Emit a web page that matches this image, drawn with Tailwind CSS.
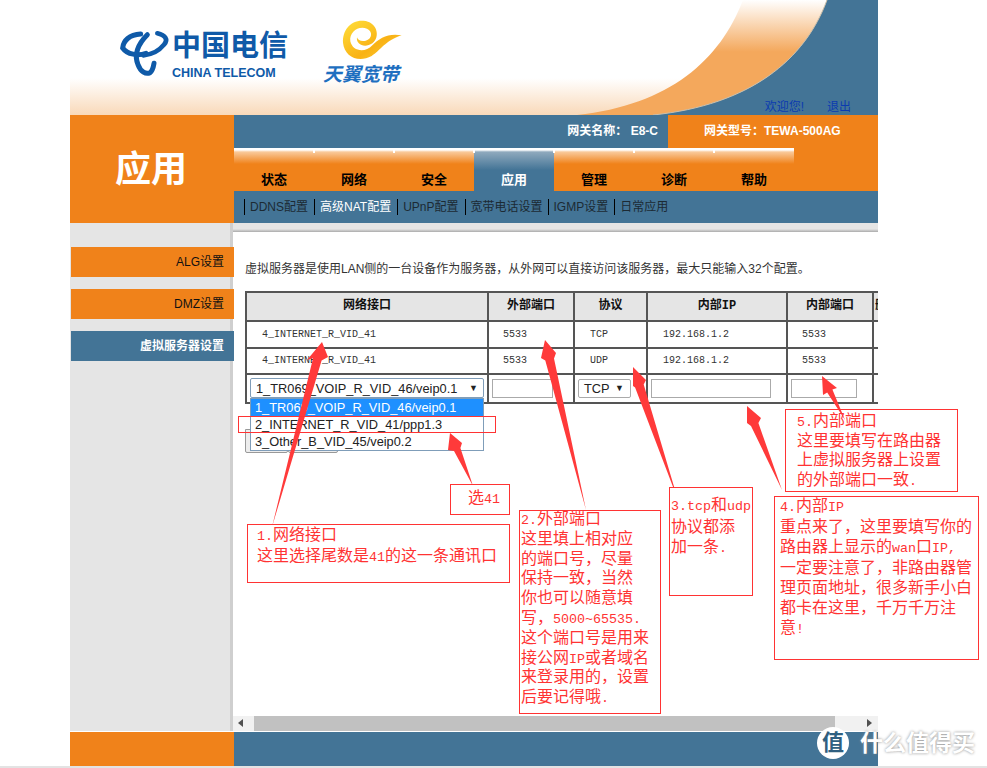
<!DOCTYPE html>
<html lang="zh-CN">
<head>
<meta charset="utf-8">
<script src="https://cdn.jsdelivr.net/npm/@tailwindcss/browser@4"></script>
</head>
<body class="bg-white">
<div class="relative w-[987px] h-[768px] overflow-hidden bg-white text-[12px] [font-family:'Liberation_Sans','Noto_Sans_CJK_SC',sans-serif]">

  <div class="ml-[70px] w-[808px] h-[766px] flex flex-col">
    <!-- header -->
    <header class="relative h-[115px] flex bg-[linear-gradient(#fff_0,#fff_68%,#f9d9b9_100%)]">
      <svg class="absolute inset-0" width="808" height="115" viewBox="0 0 808 115">
        <defs>
          <linearGradient id="sw" x1="0" y1="0" x2="0" y2="1">
            <stop offset="0" stop-color="#fff"/>
            <stop offset=".45" stop-color="#f4a85c"/>
            <stop offset="1" stop-color="#f4a85c"/>
          </linearGradient>
        </defs>
        <path d="M673 0C650 60 600 105 507 115L583 115C680 105 735 60 757 0Z" fill="url(#sw)"/>
        <path d="M757 0C735 60 680 105 583 115L808 115L808 0Z" fill="#437496"/>
        <path d="M757 0C735 60 680 105 583 115" fill="none" stroke="#cdbfa8" stroke-width="1"/>
      </svg>
      <div class="relative flex items-start pl-[40px] pt-[20px]">
        <svg width="62" height="70" viewBox="0 0 186 210" fill="none" stroke="#0f5aa8" stroke-linecap="round">
          <path d="M92 42C58 44 40 62 38 84C52 104 84 108 108 100" stroke-width="15"/>
          <path d="M142 40C166 46 176 58 162 74C146 94 124 104 100 106" stroke-width="14"/>
          <path d="M112 44C84 72 72 104 84 134C92 156 108 164 120 158C128 152 130 142 132 130" stroke-width="15"/>
        </svg>
        <div class="w-[118px] pt-[6px] flex flex-col text-[#0f5aa8]">
          <div class="text-[29px] leading-[40px] font-bold whitespace-nowrap">中国电信</div>
          <div class="text-[12.5px] leading-[14px] font-bold whitespace-nowrap">CHINA TELECOM</div>
        </div>
        <div class="ml-[25px] -mt-[10px] w-[100px] flex flex-col">
          <svg width="100" height="56" viewBox="0 0 300 168">
            <defs>
              <linearGradient id="gd" x1="0" y1="0" x2="1" y2="1">
                <stop offset="0" stop-color="#ffdf3a"/>
                <stop offset=".6" stop-color="#f9b215"/>
                <stop offset="1" stop-color="#fbd23a"/>
              </linearGradient>
            </defs>
            <path d="M145 32C105 30 82 62 84 98C88 140 130 160 170 138C196 122 210 92 260 76C222 68 192 84 172 106C150 130 112 124 106 94C102 66 130 46 156 56C174 64 172 86 152 92C140 96 128 90 126 82C122 104 150 116 172 100C198 80 186 34 145 32Z" fill="url(#gd)"/>
          </svg>
          <div class="pl-[8px] text-[19px] leading-[18px] font-bold italic text-[#1e6fc0] whitespace-nowrap">天翼宽带</div>
        </div>
      </div>
      <div class="relative ml-auto self-end flex gap-[23px] pr-[27px] text-[12px] leading-[16px] text-[#0b3bb0]">
        <span>欢迎您!</span><span>退出</span>
      </div>
    </header>

    <!-- nav -->
    <div class="h-[108px] flex">
      <div class="w-[164px] bg-[#f0821a] text-white text-[36px] font-bold flex items-center justify-center pr-[2px] pt-[3px]">应用</div>
      <div class="flex-1 flex flex-col">
        <div class="h-[33px] flex bg-[#437496] text-white font-bold">
          <div class="flex-1 flex items-center justify-end pr-[10px] whitespace-pre">网关名称： E8-C</div>
          <div class="w-[210px] bg-[#f0821a] flex items-center pl-[36px]">网关型号：TEWA-500AG</div>
        </div>
        <div class="h-[43px] flex bg-[#f0821a] font-bold text-[13px] text-black">
          <div class="relative w-[80px] flex items-end justify-center pb-[2px] leading-[18px] bg-[linear-gradient(#fff_0,#fff_2px,#f9c99a_4px,#f0821a_16px)]">状态</div>
          <div class="relative w-[80px] flex items-end justify-center pb-[2px] leading-[18px] bg-[linear-gradient(#fff_0,#fff_2px,#f9c99a_4px,#f0821a_16px)]"><i class="absolute left-[-1px] top-[2px] w-[2px] h-[3px] bg-white"></i>网络</div>
          <div class="relative w-[80px] flex items-end justify-center pb-[2px] leading-[18px] bg-[linear-gradient(#fff_0,#fff_2px,#f9c99a_4px,#f0821a_16px)]"><i class="absolute left-[-1px] top-[2px] w-[2px] h-[3px] bg-white"></i>安全</div>
          <div class="relative w-[80px] flex items-end justify-center pb-[2px] leading-[18px] text-white bg-[linear-gradient(#fff_0,#fff_2px,#8fa9bd_4px,#437496_22px)]"><i class="absolute left-[-1px] top-[2px] w-[2px] h-[3px] bg-white"></i>应用</div>
          <div class="relative w-[80px] flex items-end justify-center pb-[2px] leading-[18px] bg-[linear-gradient(#fff_0,#fff_2px,#f9c99a_4px,#f0821a_16px)]"><i class="absolute left-[-1px] top-[2px] w-[2px] h-[3px] bg-white"></i>管理</div>
          <div class="relative w-[80px] flex items-end justify-center pb-[2px] leading-[18px] bg-[linear-gradient(#fff_0,#fff_2px,#f9c99a_4px,#f0821a_16px)]"><i class="absolute left-[-1px] top-[2px] w-[2px] h-[3px] bg-white"></i>诊断</div>
          <div class="relative w-[80px] flex items-end justify-center pb-[2px] leading-[18px] bg-[linear-gradient(#fff_0,#fff_2px,#f9c99a_4px,#f0821a_16px)]"><i class="absolute left-[-1px] top-[2px] w-[2px] h-[3px] bg-white"></i>帮助</div>
        </div>
        <div class="h-[32px] bg-[#437496] flex items-center pl-[10px] pt-[1px] text-[#1c2a33] leading-[16px] whitespace-nowrap">
          <span class="border-l border-black pl-[5px] pr-[6px]">DDNS配置</span>
          <span class="border-l border-black pl-[5px] pr-[6px] text-white">高级NAT配置</span>
          <span class="border-l border-black pl-[5px] pr-[6px]">UPnP配置</span>
          <span class="border-l border-black pl-[5px] pr-[5px]">宽带电话设置</span>
          <span class="border-l border-black pl-[5px] pr-[6px]">IGMP设置</span>
          <span class="border-l border-black pl-[5px] pr-[6px]">日常应用</span>
        </div>
      </div>
    </div>

    <!-- body -->
    <div class="h-[509px] flex">
      <aside class="w-[163px] bg-[#e5e5e5] border-r-[3px] border-[#cfcfcf] pt-[24px] flex flex-col gap-[12px]">
        <div class="ml-[1px] w-[163px] h-[30px] bg-[#f0821a] flex items-center justify-end pr-[10px] text-[#111]">ALG设置</div>
        <div class="ml-[1px] w-[163px] h-[30px] bg-[#f0821a] flex items-center justify-end pr-[10px] text-[#111]">DMZ设置</div>
        <div class="ml-[1px] w-[163px] h-[30px] bg-[#437496] flex items-center justify-end pr-[10px] text-white font-bold">虚拟服务器设置</div>
      </aside>
      <main class="flex-1 flex flex-col min-w-0">
        <div class="h-[9px] bg-[linear-gradient(#e5e5e5_0,#e5e5e5_6px,#aaa_100%)]"></div>
        <div class="relative h-[484px] pl-[12px]">
          <p class="pt-[30px] leading-[14px] text-[#333] whitespace-nowrap">虚拟服务器是使用LAN侧的一台设备作为服务器，从外网可以直接访问该服务器，最大只能输入32个配置。</p>
          <div class="mt-[15px] w-[633px] overflow-hidden">
            <table class="table-fixed border-collapse w-[727px] text-[10px] text-[#333] [font-family:'Liberation_Mono','Noto_Sans_CJK_SC',monospace]">
              <thead>
                <tr class="h-[29px] bg-[#e5e5e5] text-[12px] text-[#111]">
                  <th class="w-[242px] border-2 border-[#555] font-bold">网络接口</th>
                  <th class="w-[86px] border-2 border-[#555] font-bold">外部端口</th>
                  <th class="w-[73px] border-2 border-[#555] font-bold">协议</th>
                  <th class="w-[140px] border-2 border-[#555] font-bold">内部IP</th>
                  <th class="w-[86px] border-2 border-[#555] font-bold">内部端口</th>
                  <th class="w-[100px] border-2 border-[#555] font-bold text-left pl-[1px]">删除</th>
                </tr>
              </thead>
              <tbody>
                <tr class="h-[27px]">
                  <td class="border-2 border-[#555] pl-[15px]">4_INTERNET_R_VID_41</td>
                  <td class="border-2 border-[#555] pl-[14px]">5533</td>
                  <td class="border-2 border-[#555] pl-[15px]">TCP</td>
                  <td class="border-2 border-[#555] pl-[15px]">192.168.1.2</td>
                  <td class="border-2 border-[#555] pl-[14px]">5533</td>
                  <td class="border-2 border-[#555]"></td>
                </tr>
                <tr class="h-[26px]">
                  <td class="border-2 border-[#555] pl-[15px]">4_INTERNET_R_VID_41</td>
                  <td class="border-2 border-[#555] pl-[14px]">5533</td>
                  <td class="border-2 border-[#555] pl-[15px]">UDP</td>
                  <td class="border-2 border-[#555] pl-[15px]">192.168.1.2</td>
                  <td class="border-2 border-[#555] pl-[14px]">5533</td>
                  <td class="border-2 border-[#555]"></td>
                </tr>
                <tr class="h-[29px] text-[12.8px] [font-family:'Liberation_Sans',sans-serif] text-[#222]">
                  <td class="border-2 border-[#555] pl-[3px]">
                    <div class="w-[234px] h-[20px] flex items-center justify-between px-[5px] border border-[#7f9db9] rounded-[2px]"><span>1_TR069_VOIP_R_VID_46/veip0.1</span><span class="text-[9px]">▼</span></div>
                  </td>
                  <td class="border-2 border-[#555] pl-[3px]"><div class="w-[61px] h-[19px] border border-[#aaa]"></div></td>
                  <td class="border-2 border-[#555] pl-[3px]">
                    <div class="w-[53px] h-[19px] flex items-center justify-between pl-[5px] pr-[6px] border border-[#aaa] rounded-[2px]"><span>TCP</span><span class="text-[9px]">▼</span></div>
                  </td>
                  <td class="border-2 border-[#555] pl-[3px]"><div class="w-[120px] h-[19px] border border-[#aaa]"></div></td>
                  <td class="border-2 border-[#555] pl-[3px]"><div class="w-[66px] h-[19px] border border-[#aaa]"></div></td>
                  <td class="border-y-2 border-r-2 border-l border-y-[#555] border-l-[#999] border-r-[#555]"></td>
                </tr>
              </tbody>
            </table>
          </div>
          <div class="mt-[25px] flex">
            <div class="w-[43px] h-[24px] bg-[#ededed] border border-[#999] rounded-b-[2px]"></div>
            <div class="w-[50px] h-[24px] bg-[#ededed] border border-[#999] rounded-b-[2px]"></div>
          </div>
          <!-- open dropdown -->
          <ul class="absolute left-[17px] top-[166px] w-[234px] border border-[#7f9db9] bg-white text-[12.8px] leading-[17px] text-[#222] whitespace-nowrap">
            <li class="pl-[4px] bg-[#1e90ff] text-white">1_TR069_VOIP_R_VID_46/veip0.1</li>
            <li class="pl-[4px]">2_INTERNET_R_VID_41/ppp1.3</li>
            <li class="pl-[4px]">3_Other_B_VID_45/veip0.2</li>
          </ul>
        </div>
        <!-- horizontal scrollbar -->
        <div class="h-[15px] bg-[#f1f1f1] flex items-center">
          <svg class="ml-[4px]" width="6" height="8" viewBox="0 0 6 8"><path d="M6 0V8L1 4Z" fill="#505050"/></svg>
          <div class="ml-[11px] w-[581px] h-[15px] bg-[#c1c1c1]"></div>
          <svg class="ml-[32px]" width="6" height="8" viewBox="0 0 6 8"><path d="M0 0V8L5 4Z" fill="#505050"/></svg>
        </div>
      </main>
    </div>

    <!-- footer -->
    <div class="h-[34px] mt-[1px] flex">
      <div class="w-[164px] bg-[#f0821a]"></div>
      <div class="flex-1 bg-[#437496]"></div>
    </div>
  </div>
  <div class="h-[2px] bg-[#e3e3e3]"></div>

  <!-- annotation arrows -->
  <svg class="absolute inset-0 pointer-events-none" width="987" height="768" viewBox="0 0 987 768" fill="#ff3a3a">
    <polygon points="322,342 328,357 321.6,360.6 272,527 313,358.2 307,360"/>
    <polygon points="545,340 556,353 554,358.4 586,510 545.3,360.5 541,358"/>
    <polygon points="633,367 646,380 643.7,384.6 678,500 635.1,387.4 633,386"/>
    <polygon points="747,406 761,418 758.4,423 782,490 751,426 747,423"/>
    <polygon points="822,376 837,388 832.4,389.6 845,420 827.2,392.4 823,395"/>
    <polygon points="450,433 462,443 460.4,448.1 473,486 454,450.9 448,450"/>
  </svg>

  <!-- annotations -->
  <div class="absolute left-[238px] top-[416px] w-[258px] h-[17px] border border-[#ff3333]"></div>
  <div class="absolute left-[450px] top-[484px] w-[60px] h-[31px] border border-[#ff3333] pl-[17px] text-[16px] leading-[29px] text-[#ff3333] bg-white [font-family:'Liberation_Mono','Noto_Sans_CJK_SC',monospace]">选<span class="text-[13.33px]">41</span></div>
  <div class="absolute left-[247px] top-[524px] w-[263px] h-[59px] border border-[#ff3333] pl-[9px] pt-px text-[16px] leading-[20px] text-[#ff3333] bg-white [font-family:'Liberation_Mono','Noto_Sans_CJK_SC',monospace]"><span class="text-[13.33px]">1.</span>网络接口<br>这里选择尾数是<span class="text-[13.33px]">41</span>的这一条通讯口</div>
  <div class="absolute left-[519px] top-[510px] w-[142px] h-[204px] border border-[#ff3333] pl-px text-[16px] leading-[19.8px] text-[#ff3333] bg-white whitespace-nowrap [font-family:'Liberation_Mono','Noto_Sans_CJK_SC',monospace]"><span class="text-[13.33px]">2.</span>外部端口<br>这里填上相对应<br>的端口号，尽量<br>保持一致，当然<br>你也可以随意填<br>写，<span class="text-[13.33px]">5000~65535.</span><br>这个端口号是用来<br>接公网<span class="text-[13.33px]">IP</span>或者域名<br>来登录用的，设置<br>后要记得哦<span class="text-[13.33px]">.</span></div>
  <div class="absolute left-[669px] top-[487px] w-[84px] h-[109px] border border-[#ff3333] pl-[1px] pt-[8px] text-[16px] leading-[20.5px] text-[#ff3333] bg-white whitespace-nowrap [font-family:'Liberation_Mono','Noto_Sans_CJK_SC',monospace]"><span class="text-[13.33px]">3.tcp</span>和<span class="text-[13.33px]">udp</span><br>协议都添<br>加一条<span class="text-[13.33px]">.</span></div>
  <div class="absolute left-[774px] top-[496px] w-[205px] h-[164px] border border-[#ff3333] pl-[5px] text-[16px] leading-[20px] text-[#ff3333] bg-white whitespace-nowrap [font-family:'Liberation_Mono','Noto_Sans_CJK_SC',monospace]"><span class="text-[13.33px]">4.</span>内部<span class="text-[13.33px]">IP</span><br>重点来了，这里要填写你的<br>路由器上显示的<span class="text-[13.33px]">wan</span>口<span class="text-[13.33px]">IP,</span><br>一定要注意了，非路由器管<br>理页面地址，很多新手小白<br>都卡在这里，千万千万注<br>意<span class="text-[13.33px]">!</span></div>
  <div class="absolute left-[785px] top-[409px] w-[173px] h-[83px] border border-[#ff3333] pl-[11px] pt-[3px] text-[16px] leading-[19.7px] text-[#ff3333] whitespace-nowrap [font-family:'Liberation_Mono','Noto_Sans_CJK_SC',monospace]"><span class="text-[13.33px]">5.</span>内部端口<br>这里要填写在路由器<br>上虚拟服务器上设置<br>的外部端口一致<span class="text-[13.33px]">.</span></div>

  <!-- watermark -->
  <div class="absolute left-[817px] top-[727px] flex items-center gap-[11px]">
    <div class="w-[32px] h-[32px] rounded-full bg-white flex items-center justify-center text-[22px] font-bold text-[#2f5f80] leading-none">值</div>
    <div class="text-[23px] leading-[32px] font-bold text-white whitespace-nowrap [text-shadow:0_0_3px_#888]">什么值得买</div>
  </div>
</div>
</body>
</html>
